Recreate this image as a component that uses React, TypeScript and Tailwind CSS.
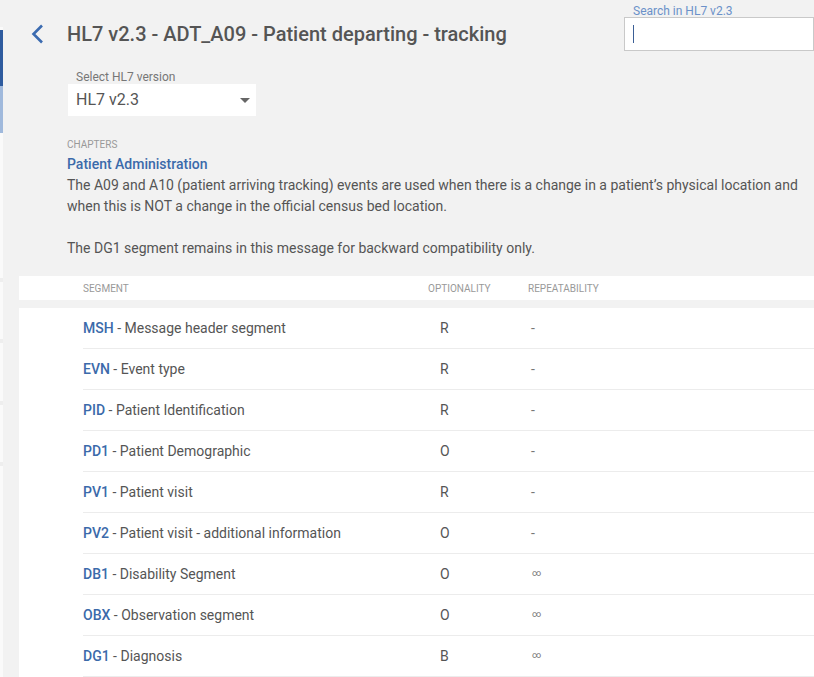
import React from "react";

const rows = [
  { code: "MSH", name: "Message header segment", opt: "R", rep: "-" },
  { code: "EVN", name: "Event type", opt: "R", rep: "-" },
  { code: "PID", name: "Patient Identification", opt: "R", rep: "-" },
  { code: "PD1", name: "Patient Demographic", opt: "O", rep: "-" },
  { code: "PV1", name: "Patient visit", opt: "R", rep: "-" },
  { code: "PV2", name: "Patient visit - additional information", opt: "O", rep: "-" },
  { code: "DB1", name: "Disability Segment", opt: "O", rep: "∞" },
  { code: "OBX", name: "Observation segment", opt: "O", rep: "∞" },
  { code: "DG1", name: "Diagnosis", opt: "B", rep: "∞" },
];

const SideStrip = () => (
  <div className="w-[3px] shrink-0 flex flex-col bg-[#fafafa]">
    <div className="h-[27px] bg-[#f2f2f2]" />
    <div className="h-[3px]" />
    <div className="h-[56px] bg-[#2f5c9f]" />
    <div className="h-[47px] bg-[#a0b9dc]" />
    <div className="h-[145px]" />
    <div className="h-[4px] bg-[#eeeeee]" />
    <div className="h-[57px]" />
    <div className="h-[4px] bg-[#eeeeee]" />
    <div className="h-[58px]" />
    <div className="h-[4px] bg-[#eeeeee]" />
    <div className="h-[57px]" />
    <div className="h-[4px] bg-[#eeeeee]" />
  </div>
);

export default function App() {
  return (
    <div
      className="flex h-[677px] w-[814px] overflow-hidden bg-white text-[#555]"
      style={{ fontFamily: "Roboto, 'Liberation Sans', sans-serif" }}
    >
      <SideStrip />
      <div className="flex-1 min-w-0 bg-[#f2f2f2] flex flex-col">
        {/* header */}
        <div className="flex justify-between">
          <div className="flex items-center pl-[26px] pt-[23px] h-[45px]">
            <svg width="16" height="20" viewBox="0 0 16 20">
              <path d="M13 1.5 L4.5 10 L13 18.5" fill="none" stroke="#3b6bb0" strokeWidth="2.6" />
            </svg>
            <h1 className="ml-[22px] text-[20px] font-medium leading-[24px] text-[#555] whitespace-nowrap">
              HL7 v2.3 - ADT_A09 - Patient departing - tracking
            </h1>
          </div>
          <div className="flex flex-col w-[190px] pt-[5px]">
            <label className="pl-[9px] text-[12px] leading-[12px] text-[#6b91c9]">Search in HL7 v2.3</label>
            <div className="h-[34px] bg-white border border-[#c9c9c9] flex items-center pl-[8px]">
              <div className="w-px h-[18px] bg-[#3b5f96]" />
            </div>
          </div>
        </div>

        {/* version select */}
        <div className="ml-[65px] mt-[19px] w-[188px]">
          <div className="pl-[8px] text-[12px] leading-[14px] text-[#777]">Select HL7 version</div>
          <div className="h-[32px] bg-white flex items-center justify-between pl-[8px] pr-[6px]">
            <span className="text-[16px] text-[#555]">HL7 v2.3</span>
            <svg width="10" height="5" viewBox="0 0 10 5">
              <path d="M0 0 L10 0 L5 5 Z" fill="#666" />
            </svg>
          </div>
        </div>

        {/* chapter */}
        <div className="ml-[64px] mt-[23px] pr-[10px]">
          <div className="text-[10px] leading-[12px] text-[#999] uppercase">Chapters</div>
          <div className="mt-[5px] text-[14px] leading-[17px] font-medium text-[#3b6aaa]">
            Patient Administration
          </div>
          <p className="mt-[2px] text-[14px] leading-[21px] text-[#555] w-[740px]">
            The A09 and A10 (patient arriving tracking) events are used when there is a change in a patient’s physical
            location and when this is NOT a change in the official census bed location.
          </p>
          <p className="mt-[21px] text-[14px] leading-[21px] text-[#555]">
            The DG1 segment remains in this message for backward compatibility only.
          </p>
        </div>

        {/* table */}
        <div className="ml-[16px] mt-[17px] flex flex-col">
          <div className="h-[24px] bg-white flex items-center pl-[64px] text-[10px] text-[#999] uppercase">
            <div className="w-[345px]">Segment</div>
            <div className="w-[100px]">Optionality</div>
            <div>Repeatability</div>
          </div>
          <div className="h-[8px]" />
          <div className="bg-white flex-1 pl-[64px]">
            {rows.map((r) => (
              <div key={r.code} className="h-[41px] flex items-center border-b border-[#ececec] text-[14px]">
                <div className="w-[345px] whitespace-nowrap">
                  <span className="font-medium text-[#3b6aaa]">{r.code}</span>
                  <span className="text-[#555]"> - {r.name}</span>
                </div>
                <div className="w-[100px] pl-[12px] text-[#555]">{r.opt}</div>
                <div className={r.rep === "-" ? "pl-[3px] text-[#777]" : "pl-[4px] text-[9px] text-[#777]"}>
                  {r.rep}
                </div>
              </div>
            ))}
          </div>
        </div>
      </div>
    </div>
  );
}
